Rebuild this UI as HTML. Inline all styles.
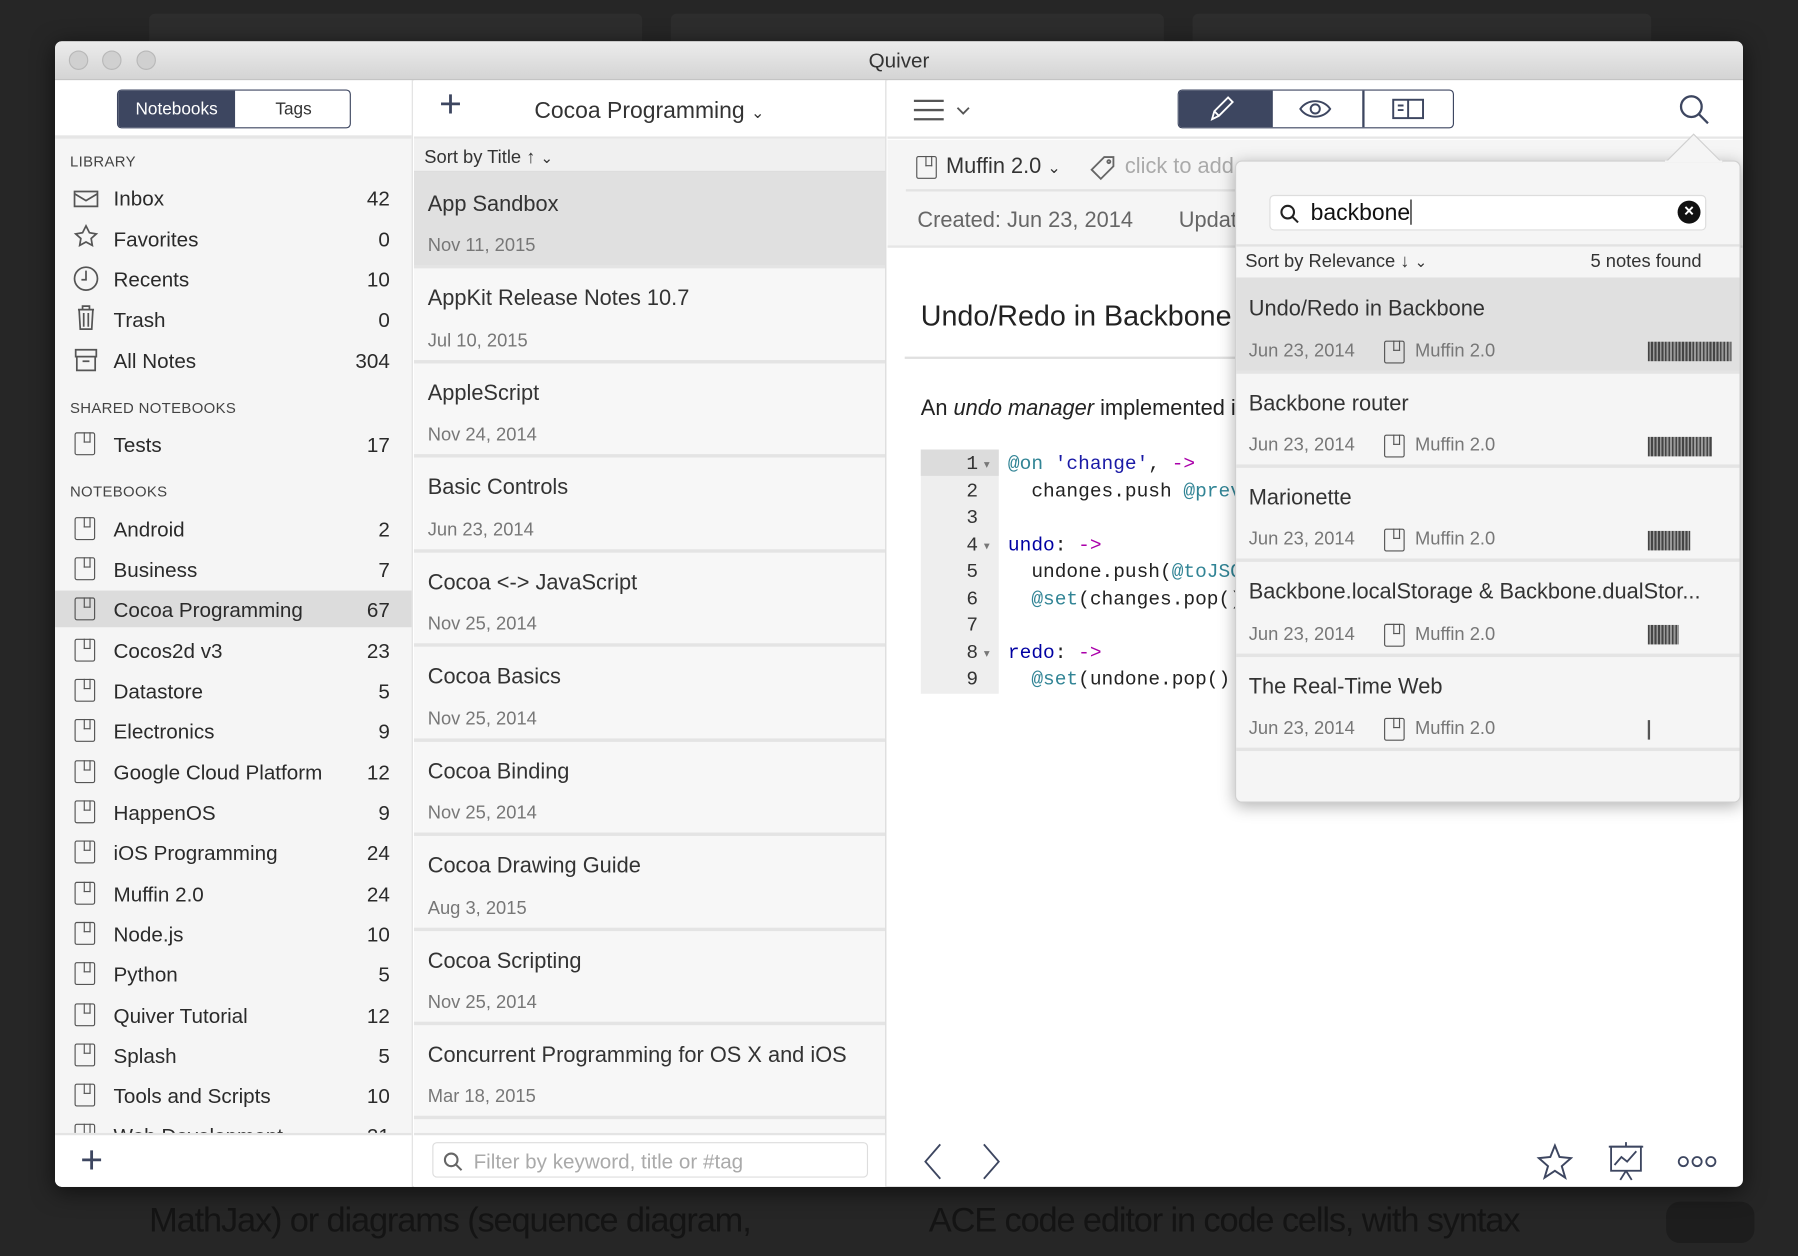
<!DOCTYPE html>
<html><head><meta charset="utf-8"><style>
*{margin:0;padding:0;box-sizing:border-box}
html,body{width:1798px;height:1256px;overflow:hidden;background:#262626;font-family:"Liberation Sans",sans-serif}
#s{position:absolute;left:0;top:0;width:1568px;height:1095px;transform:scale(1.14668);transform-origin:0 0}
.a{position:absolute}
.t{position:absolute;white-space:nowrap;line-height:24px;height:24px}
.nb{position:absolute;width:18px;height:20px;border:1.6px solid #555;border-radius:2px}
.nb:after{content:"";position:absolute;left:7px;top:-1px;width:4px;height:8px;border:1.4px solid #555;border-top:none}
.sb{font-size:18px;color:#2a2a2a}
.cnt{font-size:18px;color:#2a2a2a;text-align:right;width:40px}
.hd{font-size:13px;color:#444;letter-spacing:.3px}
.nt{font-size:19px;color:#333}
.nd{font-size:16px;color:#777}
.sep{position:absolute;height:3px;background:#e4e4e4}
.code{font-family:"Liberation Mono",monospace;font-size:17px}
.bc{position:absolute;height:17px;background:repeating-linear-gradient(90deg,#444 0 1.5px,#999 1.5px 3px)}
</style></head><body><div id="s">
<div class="a" style="left:130px;top:12px;width:430px;height:30px;background:#2d2d2d;border-radius:5px"></div>
<div class="a" style="left:585px;top:12px;width:430px;height:30px;background:#2d2d2d;border-radius:5px"></div>
<div class="a" style="left:1040px;top:12px;width:400px;height:30px;background:#2d2d2d;border-radius:5px"></div>
<div class="t" style="left:130px;top:1050px;font-size:30px;line-height:30px;height:32px;color:#141414;letter-spacing:-1px">MathJax) or diagrams (sequence diagram,</div>
<div class="t" style="left:810px;top:1050px;font-size:30px;line-height:30px;height:32px;color:#141414;letter-spacing:-1px">ACE code editor in code cells, with syntax</div>
<div class="a" style="left:1453px;top:1048px;width:77px;height:36px;background:#1d1d1d;border-radius:12px"></div>

<div class="a" style="left:48px;top:36px;width:1472px;height:999px;background:#fff;border-radius:6px;overflow:hidden;box-shadow:0 4px 20px rgba(0,0,0,.6)">
<div class="a" style="left:0;top:0;width:1472px;height:34px;background:linear-gradient(#ececec,#d4d4d4);border-bottom:1px solid #bdbdbd"></div>
<div class="a" style="left:12px;top:8px;width:17px;height:17px;border-radius:50%;background:#d0d0d0;border:1px solid #b8b8b8"></div>
<div class="a" style="left:41px;top:8px;width:17px;height:17px;border-radius:50%;background:#d0d0d0;border:1px solid #b8b8b8"></div>
<div class="a" style="left:71px;top:8px;width:17px;height:17px;border-radius:50%;background:#d0d0d0;border:1px solid #b8b8b8"></div>
<div class="t" style="left:0;width:1472px;text-align:center;top:5px;font-size:18px;color:#333">Quiver</div>
</div>

<div class="a" style="left:48px;top:70px;width:312px;height:965px;background:#f5f5f5;border-right:1px solid #d8d8d8;border-bottom-left-radius:6px;overflow:hidden">
 <div class="a" style="left:0;top:0;width:312px;height:51px;background:#fff;border-bottom:3px solid #e6e6e6"></div>
 <div class="a" style="left:54px;top:8px;width:204px;height:34px;border:1.5px solid #3d4660;border-radius:4px;background:#fff;overflow:hidden">
  <div class="a" style="left:0;top:0;width:102px;height:32px;background:#3d4660"></div>
  <div class="t" style="left:0;width:102px;top:5px;text-align:center;font-size:15px;color:#fff">Notebooks</div>
  <div class="t" style="left:102px;width:102px;top:5px;text-align:center;font-size:15px;color:#333">Tags</div>
 </div>
 <div class="a" style="left:0;top:445px;width:312px;height:32px;background:#dcdcdc"></div>
 <div class="a" style="left:0;top:918px;width:312px;height:47px;background:#fff;border-top:2px solid #e4e4e4"></div>
 <div class="t" style="left:22px;top:930px;font-size:34px;font-weight:300;color:#3d4660">+</div>
</div>
<div class="t hd" style="left:61px;top:129px">LIBRARY</div>
<div class="t hd" style="left:61px;top:344px">SHARED NOTEBOOKS</div>
<div class="t hd" style="left:61px;top:417px">NOTEBOOKS</div>
<svg class="a" style="left:62px;top:160px" width="28" height="170" fill="none" stroke="#555" stroke-width="1.5">
<path d="M3 7h20v13H3z M3 9l10 6 10-6"/>
<path d="M13 37l3 6 6 1-4.5 4 1 6-5.5-3-5.5 3 1-6-4.5-4 6-1z"/>
<circle cx="13" cy="83" r="10"/><path d="M13 76v8h-4"/>
<path d="M6 110h14M10 110v-3h6v3M7 110l1 17h10l1-17M11 113v12M15 113v12"/>
<path d="M4 145h18v6H4zM5 151h16v12H5zM10 155h6"/>
</svg>
<div class="t sb" style="left:99px;top:161px">Inbox</div><div class="t cnt" style="left:300px;top:161px">42</div>
<div class="t sb" style="left:99px;top:197px">Favorites</div><div class="t cnt" style="left:300px;top:197px">0</div>
<div class="t sb" style="left:99px;top:232px">Recents</div><div class="t cnt" style="left:300px;top:232px">10</div>
<div class="t sb" style="left:99px;top:267px">Trash</div><div class="t cnt" style="left:300px;top:267px">0</div>
<div class="t sb" style="left:99px;top:303px">All Notes</div><div class="t cnt" style="left:300px;top:303px">304</div>
<div class="nb" style="left:65px;top:377px"></div><div class="t sb" style="left:99px;top:376px">Tests</div><div class="t cnt" style="left:300px;top:376px">17</div>

<div class="nb" style="left:65px;top:451px"></div><div class="t sb" style="left:99px;top:450px">Android</div><div class="t cnt" style="left:300px;top:450px">2</div>
<div class="nb" style="left:65px;top:486px"></div><div class="t sb" style="left:99px;top:485px">Business</div><div class="t cnt" style="left:300px;top:485px">7</div>
<div class="nb" style="left:65px;top:521px"></div><div class="t sb" style="left:99px;top:520px">Cocoa Programming</div><div class="t cnt" style="left:300px;top:520px">67</div>
<div class="nb" style="left:65px;top:557px"></div><div class="t sb" style="left:99px;top:556px">Cocos2d v3</div><div class="t cnt" style="left:300px;top:556px">23</div>
<div class="nb" style="left:65px;top:592px"></div><div class="t sb" style="left:99px;top:591px">Datastore</div><div class="t cnt" style="left:300px;top:591px">5</div>
<div class="nb" style="left:65px;top:627px"></div><div class="t sb" style="left:99px;top:626px">Electronics</div><div class="t cnt" style="left:300px;top:626px">9</div>
<div class="nb" style="left:65px;top:663px"></div><div class="t sb" style="left:99px;top:662px">Google Cloud Platform</div><div class="t cnt" style="left:300px;top:662px">12</div>
<div class="nb" style="left:65px;top:698px"></div><div class="t sb" style="left:99px;top:697px">HappenOS</div><div class="t cnt" style="left:300px;top:697px">9</div>
<div class="nb" style="left:65px;top:733px"></div><div class="t sb" style="left:99px;top:732px">iOS Programming</div><div class="t cnt" style="left:300px;top:732px">24</div>
<div class="nb" style="left:65px;top:769px"></div><div class="t sb" style="left:99px;top:768px">Muffin 2.0</div><div class="t cnt" style="left:300px;top:768px">24</div>
<div class="nb" style="left:65px;top:804px"></div><div class="t sb" style="left:99px;top:803px">Node.js</div><div class="t cnt" style="left:300px;top:803px">10</div>
<div class="nb" style="left:65px;top:839px"></div><div class="t sb" style="left:99px;top:838px">Python</div><div class="t cnt" style="left:300px;top:838px">5</div>
<div class="nb" style="left:65px;top:875px"></div><div class="t sb" style="left:99px;top:874px">Quiver Tutorial</div><div class="t cnt" style="left:300px;top:874px">12</div>
<div class="nb" style="left:65px;top:910px"></div><div class="t sb" style="left:99px;top:909px">Splash</div><div class="t cnt" style="left:300px;top:909px">5</div>
<div class="nb" style="left:65px;top:945px"></div><div class="t sb" style="left:99px;top:944px">Tools and Scripts</div><div class="t cnt" style="left:300px;top:944px">10</div>
<div class="a" style="left:48px;top:978px;width:311px;height:10px;overflow:hidden">
 <div class="nb" style="left:17px;top:2px"></div><div class="t sb" style="left:51px;top:1px">Web Development</div><div class="t cnt" style="left:252px;top:1px">21</div>
</div>

<div class="a" style="left:361px;top:70px;width:412px;height:965px;background:#f7f7f7;border-right:1px solid #d8d8d8;overflow:hidden">
 <div class="a" style="left:0;top:0;width:412px;height:51px;background:#fff;border-bottom:2px solid #e6e6e6"></div>
 <div class="t" style="left:22px;top:9px;font-size:34px;font-weight:300;color:#3d4660">+</div>
 <div class="t" style="left:105px;top:15px;font-size:20px;color:#333">Cocoa Programming <span style="font-size:14px">&#8964;</span></div>
 <div class="a" style="left:0;top:51px;width:412px;height:29px;background:#f0f0f0;border-bottom:1px solid #ddd"></div>
 <div class="t" style="left:9px;top:56px;font-size:16px;color:#333">Sort by Title &#8593; <span style="font-size:13px">&#8964;</span></div>
 <div class="a" style="left:0;top:80px;width:412px;height:82px;background:#e0e0e0"></div>
 <div class="a" style="left:0;top:918px;width:412px;height:47px;background:#fff;border-top:2px solid #e4e4e4"></div>
 <div class="a" style="left:16px;top:926px;width:380px;height:31px;border:1.5px solid #ddd;border-radius:4px;background:#fff"></div>
 <svg class="a" style="left:25px;top:934px" width="18" height="18" fill="none" stroke="#666" stroke-width="1.8"><circle cx="7.5" cy="7.5" r="5.5"/><path d="M11.5 11.5l5 5"/></svg>
 <div class="t" style="left:52px;top:931px;font-size:18px;color:#aaa">Filter by keyword, title or #tag</div>
</div>
<div class="t nt" style="left:373px;top:167px">App Sandbox</div><div class="t nd" style="left:373px;top:203px">Nov 11, 2015</div>
<div class="sep" style="left:361px;top:231px;width:411px"></div>
<div class="t nt" style="left:373px;top:249px">AppKit Release Notes 10.7</div><div class="t nd" style="left:373px;top:286px">Jul 10, 2015</div>
<div class="sep" style="left:361px;top:314px;width:411px"></div>
<div class="t nt" style="left:373px;top:332px">AppleScript</div><div class="t nd" style="left:373px;top:368px">Nov 24, 2014</div>
<div class="sep" style="left:361px;top:396px;width:411px"></div>
<div class="t nt" style="left:373px;top:414px">Basic Controls</div><div class="t nd" style="left:373px;top:451px">Jun 23, 2014</div>
<div class="sep" style="left:361px;top:479px;width:411px"></div>
<div class="t nt" style="left:373px;top:497px">Cocoa &lt;-&gt; JavaScript</div><div class="t nd" style="left:373px;top:533px">Nov 25, 2014</div>
<div class="sep" style="left:361px;top:561px;width:411px"></div>
<div class="t nt" style="left:373px;top:579px">Cocoa Basics</div><div class="t nd" style="left:373px;top:616px">Nov 25, 2014</div>
<div class="sep" style="left:361px;top:644px;width:411px"></div>
<div class="t nt" style="left:373px;top:662px">Cocoa Binding</div><div class="t nd" style="left:373px;top:698px">Nov 25, 2014</div>
<div class="sep" style="left:361px;top:726px;width:411px"></div>
<div class="t nt" style="left:373px;top:744px">Cocoa Drawing Guide</div><div class="t nd" style="left:373px;top:781px">Aug 3, 2015</div>
<div class="sep" style="left:361px;top:809px;width:411px"></div>
<div class="t nt" style="left:373px;top:827px">Cocoa Scripting</div><div class="t nd" style="left:373px;top:863px">Nov 25, 2014</div>
<div class="sep" style="left:361px;top:891px;width:411px"></div>
<div class="t nt" style="left:373px;top:909px">Concurrent Programming for OS X and iOS</div><div class="t nd" style="left:373px;top:945px">Mar 18, 2015</div>
<div class="sep" style="left:361px;top:973px;width:411px"></div>

<div class="a" style="left:774px;top:70px;width:746px;height:51px;background:#fff;border-bottom:2px solid #e6e6e6"></div>
<svg class="a" style="left:795px;top:85px" width="60" height="24" fill="none" stroke="#555" stroke-width="2"><path d="M2 3h26M2 11h26M2 19h26"/><path d="M40 9l5 5 5-5" stroke-width="1.6"/></svg>
<div class="a" style="left:1027px;top:78px;width:241px;height:34px;border:1.5px solid #3d4660;border-radius:4px;background:#fff;overflow:hidden">
 <div class="a" style="left:0;top:0;width:80px;height:32px;background:#3d4660"></div>
 <div class="a" style="left:160px;top:0;width:1.5px;height:32px;background:#3d4660"></div>
 <div class="a" style="left:80px;top:0;width:1.5px;height:32px;background:#3d4660"></div>
</div>
<svg class="a" style="left:1053px;top:82px" width="26" height="26" fill="none" stroke="#fff" stroke-width="1.6"><path d="M4 22l2-7L18 3l4 4L10 19z M6 15l4 4"/></svg>
<svg class="a" style="left:1132px;top:84px" width="30" height="22" fill="none" stroke="#3d4660" stroke-width="1.7"><path d="M2 11c6-9 20-9 26 0c-6 9-20 9-26 0z"/><circle cx="15" cy="11" r="4"/></svg>
<svg class="a" style="left:1213px;top:85px" width="30" height="20" fill="none" stroke="#3d4660" stroke-width="1.7"><rect x="2" y="2" width="26" height="16"/><path d="M15 2v16M6 7h5M6 11h5"/></svg>
<svg class="a" style="left:1463px;top:81px" width="30" height="30" fill="none" stroke="#3d4660" stroke-width="2"><circle cx="12" cy="12" r="9"/><path d="M18.5 18.5l8 8"/></svg>

<div class="a" style="left:774px;top:122px;width:746px;height:94px;background:#f5f5f5;border-bottom:2px solid #e6e6e6"></div>
<div class="a" style="left:790px;top:165px;width:310px;height:2px;background:#e3e3e3"></div>
<div class="nb" style="left:799px;top:136px"></div>
<div class="t" style="left:825px;top:134px;font-size:19px;color:#333">Muffin 2.0 <span style="font-size:14px">&#8964;</span></div>
<svg class="a" style="left:950px;top:134px" width="24" height="24" fill="none" stroke="#666" stroke-width="1.6"><path d="M13 3h8v8L10 22l-8-8z"/><circle cx="17" cy="7" r="1.3"/></svg>
<div class="t" style="left:981px;top:134px;font-size:19px;color:#aaa">click to add</div>
<div class="t" style="left:800px;top:181px;font-size:19px;color:#666">Created: Jun 23, 2014</div>
<div class="t" style="left:1028px;top:181px;font-size:19px;color:#666">Updated</div>
<div class="t" style="left:803px;top:262px;font-size:25px;line-height:28px;height:28px;color:#222">Undo/Redo in Backbone</div>
<div class="a" style="left:789px;top:311px;width:300px;height:2px;background:#e0e0e0"></div>
<div class="t" style="left:803px;top:345px;font-size:19px;color:#222">An <i>undo manager</i> implemented in</div>
<div class="a" style="left:803px;top:392px;width:68px;height:213px;background:#eeeeee"></div>
<div class="a" style="left:803px;top:392px;width:68px;height:23px;background:#dcdcdc"></div>
<div class="a code" style="left:803px;top:394px;width:50px;text-align:right;line-height:23.5px;color:#333">1<br>2<br>3<br>4<br>5<br>6<br>7<br>8<br>9</div>
<div class="a" style="left:858px;top:394px;line-height:23.5px;font-size:10px;color:#777">▾<br><br><br>▾<br><br><br><br>▾</div>
<div class="a code" style="left:879px;top:394px;line-height:23.5px;color:#222;white-space:pre"><span style="color:#318495">@on</span> <span style="color:#1a1aa6">'change'</span>, <span style="color:#a0a">-&gt;</span>
  changes.push <span style="color:#318495">@previous</span>

<span style="color:#0000a2">undo</span>: <span style="color:#a0a">-&gt;</span>
  undone.push(<span style="color:#318495">@toJSON</span>
  <span style="color:#318495">@set</span>(changes.pop()

<span style="color:#0000a2">redo</span>: <span style="color:#a0a">-&gt;</span>
  <span style="color:#318495">@set</span>(undone.pop()</div>

<svg class="a" style="left:800px;top:995px" width="80" height="36" fill="none" stroke="#3d4660" stroke-width="1.6"><path d="M20 3L7 18l13 15M58 3l13 15-13 15"/></svg>
<svg class="a" style="left:1340px;top:997px" width="32" height="32" fill="none" stroke="#3d4660" stroke-width="1.7"><path d="M16 2l4 10 10 1-8 7 3 10-9-6-9 6 3-10-8-7 10-1z"/></svg>
<svg class="a" style="left:1402px;top:995px" width="32" height="36" fill="none" stroke="#3d4660" stroke-width="1.6"><rect x="3" y="5" width="26" height="21"/><path d="M1 5h30M16 1v4M16 26l-5 8M16 26l5 8M6 21l6-7 5 4 8-9"/></svg>
<svg class="a" style="left:1462px;top:1005px" width="36" height="16" fill="none" stroke="#3d4660" stroke-width="1.6"><circle cx="6" cy="8" r="4"/><circle cx="18" cy="8" r="4"/><circle cx="30" cy="8" r="4"/></svg>

<div class="a" style="left:1077px;top:140px;width:441px;height:560px;background:#f5f5f5;border-radius:6px;border:1px solid #d0d0d0;box-shadow:0 3px 14px rgba(0,0,0,.3)"></div>
<svg class="a" style="left:1452px;top:116px" width="50" height="26"><path d="M0 26L25 1L50 26z" fill="#f5f5f5" stroke="#d0d0d0"/><rect x="0" y="24" width="50" height="4" fill="#f5f5f5"/></svg>
<div class="a" style="left:1107px;top:170px;width:381px;height:31px;background:#fff;border:1.5px solid #ddd;border-radius:4px"></div>
<svg class="a" style="left:1115px;top:177px" width="20" height="20" fill="none" stroke="#222" stroke-width="1.8"><circle cx="8" cy="8" r="5.5"/><path d="M12 12l5 5"/></svg>
<div class="t" style="left:1143px;top:174px;font-size:20px;color:#111">backbone<span style="display:inline-block;width:1.5px;height:22px;background:#000;vertical-align:-4px"></span></div>
<div class="a" style="left:1463px;top:175px;width:20px;height:20px;border-radius:50%;background:#111;color:#fff;font-size:15px;line-height:20px;text-align:center;font-weight:bold">×</div>
<div class="a" style="left:1078px;top:213px;width:439px;height:2px;background:#e2e2e2"></div>
<div class="t" style="left:1086px;top:217px;font-size:16px;color:#333">Sort by Relevance &#8595; <span style="font-size:13px">&#8964;</span></div>
<div class="t" style="left:1387px;top:217px;font-size:16px;color:#333">5 notes found</div>
<div class="a" style="left:1078px;top:242px;width:439px;height:82px;background:#e0e0e0"></div>

<div class="t nt" style="left:1089px;top:258px">Undo/Redo in Backbone</div>
<div class="t nd" style="left:1089px;top:295px">Jun 23, 2014</div><div class="nb" style="left:1207px;top:297px"></div><div class="t nd" style="left:1234px;top:295px">Muffin 2.0</div>
<div class="bc" style="left:1437px;top:298px;width:73px"></div>
<div class="sep" style="left:1078px;top:323px;width:439px"></div>

<div class="t nt" style="left:1089px;top:341px">Backbone router</div>
<div class="t nd" style="left:1089px;top:377px">Jun 23, 2014</div><div class="nb" style="left:1207px;top:379px"></div><div class="t nd" style="left:1234px;top:377px">Muffin 2.0</div>
<div class="bc" style="left:1437px;top:381px;width:56px"></div>
<div class="sep" style="left:1078px;top:405px;width:439px"></div>

<div class="t nt" style="left:1089px;top:423px">Marionette</div>
<div class="t nd" style="left:1089px;top:459px">Jun 23, 2014</div><div class="nb" style="left:1207px;top:461px"></div><div class="t nd" style="left:1234px;top:459px">Muffin 2.0</div>
<div class="bc" style="left:1437px;top:463px;width:37px"></div>
<div class="sep" style="left:1078px;top:487px;width:439px"></div>

<div class="t nt" style="left:1089px;top:505px">Backbone.localStorage &amp; Backbone.dualStor...</div>
<div class="t nd" style="left:1089px;top:542px">Jun 23, 2014</div><div class="nb" style="left:1207px;top:544px"></div><div class="t nd" style="left:1234px;top:542px">Muffin 2.0</div>
<div class="bc" style="left:1437px;top:545px;width:27px"></div>
<div class="sep" style="left:1078px;top:570px;width:439px"></div>

<div class="t nt" style="left:1089px;top:588px">The Real-Time Web</div>
<div class="t nd" style="left:1089px;top:624px">Jun 23, 2014</div><div class="nb" style="left:1207px;top:626px"></div><div class="t nd" style="left:1234px;top:624px">Muffin 2.0</div>
<div class="a" style="left:1437px;top:628px;width:2px;height:17px;background:#555"></div>
<div class="sep" style="left:1078px;top:652px;width:439px"></div>
</div></body></html>
